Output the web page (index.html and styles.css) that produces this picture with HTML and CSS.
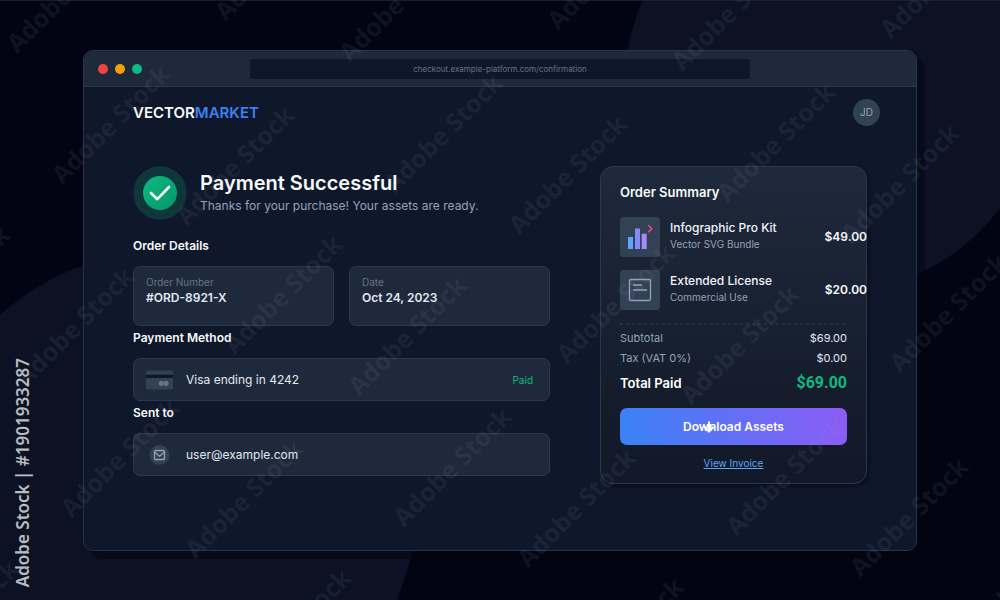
FILE: index.html
```html
<!DOCTYPE html>
<html lang="en">
<head>
    <meta charset="UTF-8">
    <meta name="viewport" content="width=device-width, initial-scale=1.0">
    <title>Payment Successful</title>
    <link rel="stylesheet" href="styles.css">
</head>
<body>
    <svg class="backdrop" viewBox="0 0 1000 600" preserveAspectRatio="xMidYMid slice" aria-hidden="true">
        <circle cx="833" cy="83" r="208"/>
        <circle cx="167" cy="500" r="250"/>
    </svg>

    <div class="window">
        <div class="titlebar">
            <div class="dots">
                <span class="dot red"></span>
                <span class="dot amber"></span>
                <span class="dot green"></span>
            </div>
            <div class="address">checkout.example-platform.com/confirmation</div>
        </div>

        <header class="topbar">
            <div class="logo">VECTOR<span>MARKET</span></div>
            <div class="avatar">JD</div>
        </header>

        <main class="content">
            <section class="details">
                <div class="hero">
                    <svg class="hero-icon" viewBox="0 0 54 54" aria-hidden="true">
                        <defs>
                            <linearGradient id="green" x1="0" y1="0" x2="1" y2="1">
                                <stop offset="0" stop-color="#10b981"/>
                                <stop offset="1" stop-color="#059669"/>
                            </linearGradient>
                        </defs>
                        <circle cx="27" cy="27" r="26.7" fill="#10b981" fill-opacity=".2"/>
                        <circle cx="27" cy="27" r="17" fill="url(#green)"/>
                        <path d="M18 27l6.300 6.200L36 21" fill="none" stroke="#fff" stroke-width="2.6" stroke-linecap="round" stroke-linejoin="round"/>
                    </svg>
                    <div>
                        <h1>Payment Successful</h1>
                        <p>Thanks for your purchase! Your assets are ready.</p>
                    </div>
                </div>

                <h2>Order Details</h2>
                <div class="boxes">
                    <div class="box order-box">
                        <span>Order Number</span>
                        <strong>#ORD-8921-X</strong>
                    </div>
                    <div class="box order-box">
                        <span>Date</span>
                        <strong>Oct 24, 2023</strong>
                    </div>
                </div>

                <h2>Payment Method</h2>
                <div class="box row-box">
                    <svg class="row-icon" viewBox="0 0 27 20" aria-hidden="true">
                        <rect y=".5" width="27" height="19" rx="1.5" fill="#334155"/>
                        <rect y="4.7" width="27" height="3.3" fill="#0f172a"/>
                        <circle cx="15.3" cy="13.3" r="2.6" fill="#64748b"/>
                        <circle cx="20" cy="13.3" r="2.6" fill="#64748b"/>
                    </svg>
                    <span>Visa ending in 4242</span>
                    <span class="paid">Paid</span>
                </div>

                <h2>Sent to</h2>
                <div class="box row-box">
                    <svg class="row-icon" viewBox="0 0 27 20" aria-hidden="true">
                        <circle cx="13.5" cy="10" r="10" fill="#334155"/>
                        <rect x="8.5" y="5.5" width="10" height="9" rx="1" fill="none" stroke="#94a3b8" stroke-width="1.3"/>
                        <path d="M8.5 7l5 4.200 5-4.200" fill="none" stroke="#94a3b8" stroke-width="1.3"/>
                    </svg>
                    <span>user@example.com</span>
                </div>
            </section>

            <aside class="summary">
                <h2>Order Summary</h2>
                <div class="item">
                    <svg class="thumb" viewBox="0 0 40 40" aria-hidden="true">
                        <rect width="40" height="40" rx="3.5" fill="#334155"/>
                        <rect x="8" y="20" width="5" height="12" fill="#60a5fa"/>
                        <rect x="15" y="11.5" width="5" height="20.5" fill="#818cf8"/>
                        <rect x="21.7" y="16.7" width="5" height="15.3" fill="#a78bfa"/>
                        <path d="M28.3 8.3l3.400 3.400-3.400 3.400" fill="none" stroke="#ec4899" stroke-width="1.5"/>
                    </svg>
                    <div class="item-text">
                        <strong>Infographic Pro Kit</strong>
                        <span>Vector SVG Bundle</span>
                    </div>
                    <b>$49.00</b>
                </div>
                <div class="item">
                    <svg class="thumb" viewBox="0 0 40 40" aria-hidden="true">
                        <rect width="40" height="40" rx="3.5" fill="#334155"/>
                        <rect x="9.5" y="9.5" width="21" height="21" rx="1.5" fill="none" stroke="#94a3b8" stroke-width="1.3"/>
                        <path d="M13 15h9M13 20h14" stroke="#94a3b8" stroke-width="1.3"/>
                    </svg>
                    <div class="item-text">
                        <strong>Extended License</strong>
                        <span>Commercial Use</span>
                    </div>
                    <b>$20.00</b>
                </div>

                <svg class="divider" aria-hidden="true"><line x1="0" y1="1" x2="100%" y2="1"/></svg>

                <dl>
                    <div><dt>Subtotal</dt><dd>$69.00</dd></div>
                    <div><dt>Tax (VAT 0%)</dt><dd>$0.00</dd></div>
                    <div class="total"><dt>Total Paid</dt><dd>$69.00</dd></div>
                </dl>

                <button type="button" class="download">
                    Download Assets
                    <svg viewBox="0 0 16 16" aria-hidden="true"><path d="M8 2.500v10M3.500 8L8 12.500 12.500 8"/></svg>
                </button>
                <a href="#" class="invoice">View Invoice</a>
            </aside>
        </main>
    </div>

    <svg class="marks" viewBox="0 0 1000 600" preserveAspectRatio="xMidYMid slice" aria-hidden="true">
        <defs>
            <text id="mark" transform="rotate(-45)">Adobe Stock</text>
            <!-- one tile of the repeating pattern -->
            <g id="tile">
                <use href="#mark" x="0" y="0"/>
                <use href="#mark" x="124" y="41"/>
                <use href="#mark" x="-163" y="163"/>
                <use href="#mark" x="-39" y="204"/>
            </g>
            <g id="row">
                <use href="#tile" x="-332" y="-9"/>
                <use href="#tile" x="0" y="0"/>
                <use href="#tile" x="332" y="9"/>
                <use href="#tile" x="664" y="18"/>
            </g>
        </defs>
        <use href="#row" x="226" y="22"/>
        <use href="#row" x="235" y="355"/>
        <use href="#row" x="244" y="688"/>
    </svg>
    <div class="credit">Adobe Stock | #1901933287</div>
</body>
</html>
```
FILE: styles.css
```css
* {
    box-sizing: border-box;
}
body {
    margin: 0;
    min-height: 100vh;
    padding: 50px 83px;
    position: relative;
    background: #020414;
    color: #f8fafc;
    font-family: Inter, "Liberation Sans", sans-serif;
    font-size: 12px;
    line-height: 16px;
    overflow: hidden;
}
h1, h2, p, dl, dd {
    margin: 0;
}
.backdrop,
.marks {
    position: absolute;
    top: 0;
    left: 0;
    width: 100%;
    height: 100%;
}
.backdrop {
    fill: #0c1224;
    border-top: 1px solid #1a1e2c;
}
.marks {
    pointer-events: none;
    fill: #94a3b8;
    fill-opacity: 0.1;
    font: bold 25px "Noto Sans", sans-serif;
}
.credit {
    position: absolute;
    left: 11px;
    bottom: 14px;
    writing-mode: vertical-rl;
    transform: rotate(180deg);
    color: #b9bbc0;
    font: 600 17px/24px "Noto Sans", sans-serif;
}

/* browser window */
.window {
    position: relative;
    min-height: 501px;
    background: #0f172a;
    border: 1px solid #273548;
    border-radius: 10px;
    box-shadow: 8px 8px 0 rgba(2, 4, 14, 0.5);
}
.titlebar {
    display: grid;
    grid-template-columns: 1fr 3fr 1fr;
    align-items: center;
    height: 36px;
    background: #1e293b;
    border-bottom: 1px solid #2b394c;
    border-radius: 9px 9px 0 0;
}
.dots {
    display: flex;
    gap: 7px;
    padding-left: 14px;
}
.dot {
    width: 10px;
    height: 10px;
    border-radius: 50%;
}
.red { background: #ef4444; }
.amber { background: #f59e0b; }
.green { background: #10b981; }
.address {
    background: #0f172a;
    border-radius: 3px;
    color: #64748b;
    font-size: 8px;
    line-height: 20px;
    text-align: center;
}
.topbar {
    display: flex;
    justify-content: space-between;
    align-items: center;
    padding: 12px 36px 0 49px;
}
.logo {
    font-size: 15px;
    font-weight: 600;
}
.logo span {
    color: #3b82f6;
}
.avatar {
    width: 27px;
    border-radius: 50%;
    background: #334155;
    color: #94a3b8;
    font-size: 10px;
    line-height: 27px;
    text-align: center;
}

/* page content */
.content {
    display: grid;
    grid-template-columns: 417fr 267fr;
    gap: 50px;
    align-items: start;
    padding: 40px 49px 66px;
}
.hero {
    display: flex;
    align-items: center;
    gap: 13px;
    margin-bottom: 18px;
}
.hero-icon {
    width: 54px;
    height: 54px;
}
h1 {
    font-size: 20px;
    font-weight: 600;
    line-height: 26px;
}
.hero p {
    color: #94a3b8;
    line-height: 20px;
}
h2 {
    font-size: 12px;
    font-weight: 600;
    line-height: 16px;
}
.boxes {
    display: grid;
    grid-template-columns: 1fr 1fr;
    gap: 15px;
}
.box {
    margin: 12px 0 4px;
    padding: 0 16px 0 12px;
    background: #1e293b;
    border: 1px solid #2b394c;
    border-radius: 7px;
}
.order-box {
    height: 60px;
    padding-top: 7px;
}
.order-box span,
.order-box strong {
    display: block;
}
.order-box span {
    color: #64748b;
    font-size: 10px;
}
.order-box strong {
    color: #e2e8f0;
    font-weight: 600;
}
.row-box {
    display: flex;
    align-items: center;
    gap: 13px;
    height: 43px;
    color: #e2e8f0;
}
.row-icon {
    width: 27px;
    height: 20px;
}
.paid {
    margin-left: auto;
    color: #10b981;
    font-size: 10px;
}

/* order summary */
.summary {
    min-height: 318px;
    padding: 16px 19px 11px;
    background: linear-gradient(#1e293b, #111827);
    border: 1px solid #2b394c;
    border-radius: 13px;
    box-shadow: 2px 3px 3px rgba(2, 6, 23, 0.4);
}
.summary h2 {
    margin-bottom: 16px;
    font-size: 13px;
    line-height: 18px;
}
.item {
    display: flex;
    gap: 10px;
    margin: 0 -20px 13px 0;
}
.thumb {
    width: 40px;
    height: 40px;
}
.item-text {
    flex: 1;
    padding-top: 3px;
}
.item-text strong,
.item-text span {
    display: block;
}
.item-text strong {
    color: #f1f5f9;
    font-weight: 500;
}
.item-text span {
    color: #94a3b8;
    font-size: 10px;
}
.item b {
    font-weight: 600;
    line-height: 40px;
}
.divider {
    display: block;
    width: 100%;
    height: 2px;
    stroke: #334155;
    stroke-dasharray: 3 3;
}
dl {
    margin-top: 3px;
    font-size: 11px;
    line-height: 20px;
}
dl div {
    display: flex;
    justify-content: space-between;
}
dt {
    color: #94a3b8;
}
dd {
    color: #e2e8f0;
}
.total {
    padding-top: 3px;
    font-size: 13px;
    font-weight: 600;
    line-height: 24px;
}
.total dt {
    color: #fff;
}
.total dd {
    color: #10b981;
    font-family: Roboto, sans-serif;
    font-size: 16px;
    font-weight: 700;
}
.download {
    position: relative;
    width: 100%;
    height: 37px;
    margin-top: 13px;
    border: none;
    border-radius: 7px;
    background: linear-gradient(90deg, #3b82f6, #8b5cf6);
    color: #fff;
    font: 600 12px Inter, "Liberation Sans", sans-serif;
    cursor: pointer;
}
.download svg {
    position: absolute;
    top: 11px;
    left: calc(50% - 33px);
    width: 16px;
    height: 16px;
    fill: none;
    stroke: #fff;
    stroke-width: 2;
}
.invoice {
    display: block;
    margin-top: 10px;
    color: #60a5fa;
    font-size: 10px;
    text-align: center;
}
```
